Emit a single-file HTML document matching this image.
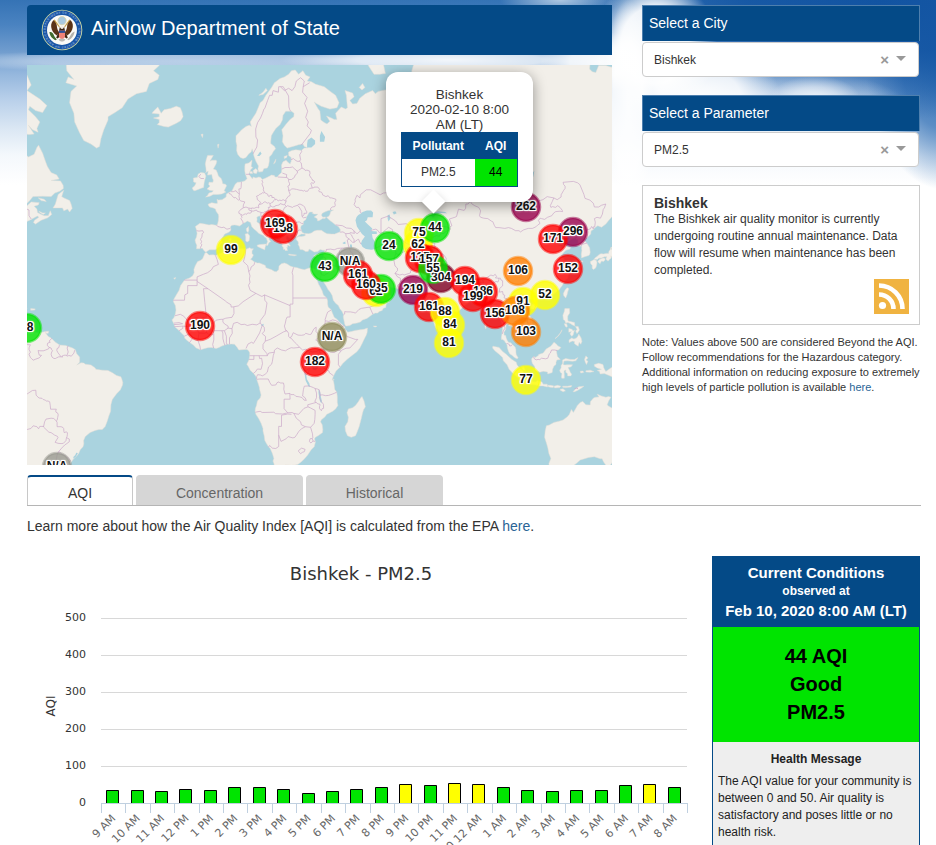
<!DOCTYPE html>
<html lang="en">
<head>
<meta charset="utf-8">
<title>AirNow Department of State</title>
<style>
*{box-sizing:border-box}
html,body{margin:0;padding:0}
body{width:936px;height:845px;overflow:hidden;position:relative;background:#fff;
 font-family:"Liberation Sans",Arial,Helvetica,sans-serif;color:#333;font-size:14px}
#sky{position:absolute;left:0;top:0;width:936px;height:330px;overflow:hidden;
 background:radial-gradient(ellipse 26px 110px at 628px 110px, rgba(255,255,255,.95) 0, rgba(255,255,255,.85) 60%, rgba(255,255,255,0) 100%),radial-gradient(ellipse 62px 70px at 655px 45px, rgba(255,255,255,.97) 0, rgba(255,255,255,.92) 55%, rgba(255,255,255,0) 100%),radial-gradient(ellipse 80px 50px at 700px 95px, rgba(255,255,255,.95) 0, rgba(255,255,255,.85) 50%, rgba(255,255,255,0) 100%),radial-gradient(ellipse 60px 30px at 600px 62px, rgba(255,255,255,.95) 0, rgba(255,255,255,.8) 50%, rgba(255,255,255,0) 100%),radial-gradient(ellipse 170px 14px at 450px 60px, rgba(255,255,255,.9) 0, rgba(255,255,255,.7) 55%, rgba(255,255,255,0) 100%),radial-gradient(ellipse 45px 22px at 815px 98px, rgba(255,255,255,.7) 0, rgba(255,255,255,.45) 50%, rgba(255,255,255,0) 100%),radial-gradient(ellipse 120px 40px at 790px 110px, rgba(255,255,255,.6) 0, rgba(255,255,255,.4) 50%, rgba(255,255,255,0) 100%),radial-gradient(ellipse 60px 16px at 560px 0px, rgba(255,255,255,.6) 0, rgba(255,255,255,0) 100%),radial-gradient(ellipse 300px 120px at 880px 0px, rgba(18,84,162,1) 0, rgba(18,84,162,.85) 45%, rgba(18,84,162,0) 100%),radial-gradient(ellipse 80px 135px at 945px 55px, rgba(34,100,174,.95) 0, rgba(40,105,178,.7) 55%, rgba(60,120,190,0) 100%),radial-gradient(ellipse 240px 12px at 180px 61px, rgba(255,255,255,.45) 0, rgba(255,255,255,.35) 60%, rgba(255,255,255,0) 100%),linear-gradient(to bottom,#3573b5 0,#4a83c1 25px,#6e9bcd 50px,#96b8de 75px,#b9d0ea 100px,#dce8f4 130px,#f4f8fc 155px,#fff 185px);}
#sky i{position:absolute;display:block;border-radius:50%}
.abs{position:absolute}
#hdr{left:27px;top:5px;width:585px;height:50px;background:#044a87;border-radius:4px 0 0 0}
#hdr .t{position:absolute;left:64px;top:11px;font-size:20px;line-height:24px;color:#fff;white-space:nowrap}
#map{left:27px;top:65px;width:585px;height:400px;background:#aad3df;overflow:hidden}
.bar{background:#044a87;color:#fff;font-size:14px;line-height:16px;padding:9px 6px 0 6px;height:36px;left:642px;width:278px;border:1px solid #4e7fae;border-bottom:none}
.sel{left:642px;width:277px;height:35px;background:#fff;border:1px solid #ccc;border-radius:4px;font-size:12px;line-height:14px;padding:10px 0 0 11px;color:#333}
.sel .x{position:absolute;right:29px;top:8px;font-size:15px;font-weight:bold;line-height:18px;color:#999}
.sel .c{position:absolute;right:12px;top:13px;width:0;height:0;border:5px solid transparent;border-top:5px solid #999;border-bottom:none}
#info{left:642px;top:185px;width:278px;height:140px;background:#fff;border:1px solid #ccc;padding:10px 11px;font-size:12px;line-height:17px;color:#333}
#info b{font-size:14px;line-height:15px;display:block;margin-bottom:0}
#note{left:642px;top:335px;width:290px;font-size:11px;line-height:15px;color:#333}
a{color:#2a6496;text-decoration:none}
.tab{top:475px;height:31px;border:1px solid #d6d6d6;border-bottom:none;border-radius:4px 4px 0 0;background:#d6d6d6;color:#666;font-size:14px;line-height:16px;text-align:center;padding-top:9px}
#t1{left:27px;width:106px;background:#fff;border:1px solid #c8c8c8;border-top:2px solid #044a87;border-bottom:none;color:#333;padding-top:8px}
#t2{left:136px;width:167px}
#t3{left:306px;width:137px}
#tabline{left:27px;top:505px;width:894px;height:1px;background:#b5b5b5}
#learn{left:27px;top:517px;font-size:14px;line-height:18px;color:#333;white-space:nowrap}
#cc{left:712px;top:556px;width:208px;height:300px;border:1px solid #044a87;background:#eee}
#cc .h{background:#044a87;color:#fff;text-align:center;font-weight:bold;height:70px;padding-top:6px}
#cc .h div{line-height:20px}
#cc .g{background:#00e400;color:#000;text-align:center;font-weight:bold;font-size:20px;line-height:28px;height:115px;padding-top:15px}
#cc .m{padding:9px 5px 0 5px;font-size:12px;line-height:17px;color:#222}
#cc .m b{display:block;text-align:center;margin-bottom:5px}
#chart{left:27px;top:556px;width:680px;height:289px}

.mk{position:absolute;width:40px;height:16px;font-weight:bold;font-size:12px;line-height:16px;text-align:center;color:#111;
 text-shadow:-1px -1px 0 #fff,1px -1px 0 #fff,-1px 1px 0 #fff,1px 1px 0 #fff,0 -1px 0 #fff,0 1px 0 #fff,-1px 0 0 #fff,1px 0 0 #fff,0 0 3px #fff,0 0 3px #fff;white-space:nowrap}
.pop{position:absolute;left:359px;top:7px;width:147px;height:130px;background:#fff;border-radius:12px;box-shadow:0 3px 14px rgba(0,0,0,.4);color:#333}
.pop .pt{position:absolute;left:0;top:15px;width:147px;text-align:center;font-size:13.5px;line-height:15px}
.pop table{position:absolute;left:15px;top:60px;width:117px;border:1px solid #044a87;border-collapse:collapse;font-size:12px}
.pop th{background:#044a87;color:#fff;height:26px;font-weight:bold;padding:0;text-align:center}
.pop td{height:28px;text-align:center;padding:0;color:#333}
.tip{position:absolute;left:398px;top:128px;width:17px;height:17px;background:#fff;transform:rotate(45deg);box-shadow:3px 3px 8px rgba(0,0,0,.25)}
</style>
</head>
<body>
<div id="sky">

</div>

<div id="hdr" class="abs">
<svg class="abs" style="left:14px;top:4px" width="42" height="42" viewBox="-21 -21 42 42">
<circle r="20.3" fill="#cfd9a4"/>
<circle r="19.4" fill="#1a56a6"/>
<path id="sealarc" d="M-16.4 0A16.4 16.4 0 1 1 16.4 0A16.4 16.4 0 1 1 -16.4 0" fill="none"/>
<text font-size="2.9" font-weight="bold" fill="#86a9dc" letter-spacing=".45"><textPath href="#sealarc">DEPARTMENT OF STATE ★ UNITED STATES OF AMERICA ★</textPath></text>
<circle r="15" fill="#fbfbf8"/>
<circle cy="-9.3" r="4.2" fill="#a9c9df" stroke="#dfd6a8" stroke-width=".8"/>
<path d="M-7.8 -10.2C-10 -9 -11.2 -6 -10.8 -3C-10.3 0.5 -8.5 3.3 -5.2 5.4L-2.8 2.4C-4.6 0.5 -5 -2.5 -5.2 -4.5C-5.5 -7 -6.5 -9 -7.8 -10.2Z" fill="#5b3418"/>
<path d="M7.8 -10.2C10 -9 11.2 -6 10.8 -3C10.3 0.5 8.5 3.3 5.2 5.4L2.8 2.4C4.6 0.5 5 -2.5 5.2 -4.5C5.5 -7 6.5 -9 7.8 -10.2Z" fill="#5b3418"/>
<path d="M-7.8 -10.2L-2.6 -3.2M7.8 -10.2L2.6 -3.2" stroke="#c9a24a" stroke-width="1.1" fill="none"/>
<path d="M-2.2 -3h4.4L3 1L5.8 7.8L4.5 8.6L0 5L-4.5 8.6L-5.8 7.8L-3 1Z" fill="#3d2411"/>
<circle cy="-2.8" r="1.7" fill="#f3efe4"/>
<path d="M-3.1 0.6h6.2v5a3.1 3.4 0 0 1 -6.2 0Z" fill="#f08278"/>
<path d="M-3.1 0.6h6.2v2.3h-6.2Z" fill="#2c4f96"/>
<path d="M-3.4 9.4C-2 12.2 2 12.2 3.4 9.4C2 8.6 -2 8.6 -3.4 9.4Z" fill="#bdbab6"/>
<path d="M-12.6 2.2C-10.6 1.4 -9 3 -8 5.4C-7.2 7.2 -6 8.4 -5 9.3L-6.6 10.2C-9 9 -12 6.6 -12.6 2.2Z" fill="#3f6a2e"/>
<path d="M12.6 1.6C10.4 2.4 9 4.2 8 6.2C7.2 7.8 6 8.6 5.2 9.3L6.5 10.3C9 9.2 12 6.4 12.6 1.6Z" fill="#b5b3ae"/>
</svg>
<div class="t">AirNow Department of State</div>
</div>

<div id="map" class="abs">
<svg class="abs" style="left:0;top:0" width="585" height="400" viewBox="0 0 585 400">
<path d="M268.2 5.0L271.6 9.3L275.9 5.8L278.7 10.2L283.0 11.9L280.1 16.0L284.4 16.8L288.7 19.3L297.2 21.7L304.3 27.2L308.6 30.3L312.0 37.7L310.0 42.7L302.9 44.1L294.4 41.3L289.2 38.4L287.2 37.0L290.9 43.4L292.9 46.2L293.8 55.0L297.2 57.6L300.0 58.9L302.9 56.3L299.5 51.0L304.3 53.0L307.2 54.4L310.0 54.4L308.6 48.3L314.3 42.0L318.5 44.1L320.5 42.7L320.0 37.7L319.4 30.3L318.0 25.6L325.6 28.0L327.1 31.8L322.8 35.5L325.6 39.1L329.9 38.4L332.8 33.3L338.4 28.7L345.6 25.6L348.4 28.7L351.2 26.4L358.4 24.9L364.0 26.4L366.9 22.5L368.3 16.0L378.3 20.1L385.4 24.1L389.6 28.0L385.4 18.5L384.8 5.8L389.6 -10.6L399.6 -12.6L422.4 -17.5L450.8 -38.8L493.5 -63.2L516.2 -22.6L519.1 -18.5L530.4 -15.5L536.1 -12.6L544.7 -17.5L556.0 -16.5L563.2 -5.0L562.6 4.1L565.2 6.7L568.8 7.6L571.7 0.5L578.8 0.5L584.5 2.3L593.0 -7.8L621.5 5.8L649.9 18.5L678.4 18.5L706.8 26.4L706.8 51.7L698.3 67.8L678.4 82.6L658.4 93.6L655.6 109.1L640.5 128.0L638.5 109.1L637.1 98.9L649.9 76.8L638.5 73.8L621.5 85.4L601.6 86.5L593.0 96.3L585.9 111.6L591.6 114.0L596.7 117.8L594.4 125.7L594.4 134.7L593.0 139.9L588.8 147.4L584.5 152.3L581.6 155.6L578.8 159.1L574.5 162.2L570.8 160.7L567.4 163.0L566.6 164.2L564.0 166.1L563.7 169.1L559.7 172.9L557.5 173.6L557.5 175.8L560.0 178.4L562.6 182.7L563.2 187.3L562.6 189.8L561.7 190.5L557.5 191.8L554.6 192.9L554.3 189.1L554.9 185.5L554.6 183.8L554.9 181.3L551.2 180.9L549.8 179.8L551.2 177.6L550.9 174.7L549.2 174.0L548.4 172.9L544.7 174.3L541.8 176.2L539.6 177.3L540.7 174.7L542.4 171.0L541.5 169.5L539.0 169.9L536.1 172.9L534.7 173.6L533.0 175.8L530.4 175.8L529.6 176.9L529.6 178.7L531.3 180.2L533.0 180.9L533.9 181.3L533.3 183.1L535.6 183.1L538.1 180.9L540.4 182.0L543.5 182.3L543.0 184.1L539.0 185.2L537.0 187.3L534.7 189.8L533.9 191.5L537.0 193.6L538.7 197.7L541.3 201.0L541.5 202.0L541.5 204.7L539.0 205.7L538.4 206.7L540.4 207.7L542.1 208.0L541.5 210.3L540.7 213.2L538.7 214.8L536.7 217.7L535.3 220.6L533.3 223.1L532.2 224.7L530.7 225.6L528.5 227.8L526.8 229.0L523.3 230.9L519.9 231.5L517.9 232.4L516.2 233.3L513.4 233.9L510.5 234.9L509.1 235.5L508.8 237.9L507.7 238.2L507.1 236.1L506.6 234.3L503.7 233.9L502.0 234.6L499.2 236.1L498.3 237.9L496.3 239.7L495.5 242.4L497.5 245.4L499.7 248.4L502.6 250.8L504.6 253.2L505.4 257.6L505.7 261.1L505.4 263.1L504.6 264.8L502.0 266.6L499.2 267.5L498.0 269.8L494.9 271.5L492.9 272.6L493.2 270.1L493.5 268.6L492.0 267.5L489.5 267.2L487.8 264.8L486.4 262.8L484.7 261.1L481.8 260.8L481.8 258.7L480.7 258.4L479.2 259.0L479.0 261.4L478.7 264.3L477.0 267.2L477.0 270.1L478.7 270.6L479.2 272.9L480.4 275.8L481.8 277.5L483.8 277.8L485.5 279.5L488.1 282.1L488.9 284.4L488.9 287.2L489.2 289.5L491.2 292.9L490.6 293.4L489.2 293.5L486.9 292.1L484.7 290.1L482.9 288.9L481.5 286.4L480.4 283.0L480.1 280.4L479.5 278.7L478.4 277.5L477.5 275.8L475.6 274.4L474.4 274.4L474.4 272.1L475.0 268.9L475.3 266.0L475.6 262.8L475.3 259.9L474.1 257.0L473.0 254.0L472.4 250.2L471.3 248.7L470.4 247.2L468.4 249.0L466.2 251.7L463.9 251.4L463.0 250.5L463.6 246.6L463.0 243.3L461.3 240.9L460.2 239.1L459.1 238.2L457.3 236.7L456.5 234.6L455.9 232.1L454.5 230.9L452.5 231.8L451.7 233.3L449.4 233.6L448.0 233.9L445.7 233.6L444.8 233.3L442.6 234.9L442.0 237.0L440.8 238.5L438.3 240.0L436.9 240.9L435.7 242.4L433.7 244.2L431.7 246.0L428.9 248.4L428.9 249.6L426.1 250.2L424.9 251.7L423.2 252.0L422.6 254.0L422.6 257.0L423.2 259.6L422.9 261.4L421.8 263.4L421.8 267.7L420.4 267.7L419.5 270.1L417.2 271.8L415.5 274.1L413.5 272.9L411.8 268.9L410.4 264.8L408.7 262.8L407.6 260.2L406.7 257.0L405.3 254.0L404.7 252.6L403.6 249.6L403.0 246.6L402.2 243.6L401.9 242.1L401.6 239.1L401.9 236.1L401.3 233.9L401.0 232.4L400.2 234.6L399.9 235.5L396.8 237.0L395.1 236.7L391.6 233.3L391.1 232.1L393.9 231.2L394.8 229.9L392.8 230.6L390.5 229.3L388.8 227.8L386.8 227.2L386.0 225.0L385.1 224.3L384.2 222.8L381.1 222.8L378.3 223.1L375.4 223.1L372.0 223.4L369.7 223.4L367.2 222.8L364.0 222.5L361.2 221.8L359.2 221.5L357.5 219.6L356.7 217.4L354.9 217.1L352.7 218.3L350.4 219.0L347.0 217.7L344.4 215.8L341.3 214.5L339.9 211.6L338.7 210.3L337.6 207.7L335.6 207.3L334.2 206.4L332.8 207.7L331.3 208.0L331.1 209.6L331.9 211.3L333.3 214.2L335.0 216.4L337.0 218.3L337.6 220.3L337.3 222.1L339.0 223.7L339.3 224.3L339.3 222.1L340.2 220.3L341.3 220.9L341.6 223.1L340.7 225.0L341.6 226.2L344.1 226.5L347.0 226.5L349.5 225.6L352.1 222.8L354.1 220.6L354.9 219.6L355.2 222.1L355.5 224.7L356.9 226.8L359.8 227.8L361.5 228.1L363.5 230.6L364.9 231.5L363.8 234.6L362.1 237.3L359.5 238.2L358.9 241.2L358.9 242.4L356.4 243.3L355.2 245.4L352.1 246.6L350.7 248.1L348.4 248.1L345.8 249.0L343.3 251.1L339.9 253.4L335.6 254.9L333.3 257.0L329.9 258.1L325.6 258.7L322.8 260.5L319.7 261.1L318.5 260.8L317.7 259.0L316.8 254.6L316.3 252.0L316.5 249.6L315.1 246.6L312.8 243.6L311.4 240.6L308.6 238.2L306.3 235.2L305.2 230.6L303.5 227.5L300.9 224.3L299.2 220.9L297.2 218.0L295.2 214.8L293.5 213.9L294.4 209.3L292.7 214.2L292.1 214.8L290.4 213.2L288.7 210.9L287.5 208.0L287.0 209.0L288.4 212.6L290.4 215.8L291.5 219.0L293.2 222.1L295.2 225.9L296.4 229.9L299.8 233.0L300.6 236.1L300.6 239.1L301.2 242.1L304.0 244.5L305.7 248.7L307.2 252.3L310.0 254.3L313.1 257.9L316.0 260.2L317.7 261.7L318.0 264.0L316.5 264.0L318.5 264.6L320.8 267.2L324.2 266.6L328.5 265.4L332.8 264.8L337.0 264.3L340.4 263.1L340.2 267.2L339.3 270.1L337.0 274.4L335.0 278.7L332.8 283.0L329.9 286.7L325.6 290.1L323.7 291.5L320.0 294.4L315.7 298.6L313.1 302.0L310.9 304.3L309.2 305.7L307.7 308.6L306.3 311.4L305.2 314.3L306.6 316.6L307.2 320.0L307.7 324.3L309.7 327.2L310.3 331.6L310.3 337.4L310.9 340.4L308.6 343.9L305.7 346.3L301.5 348.4L299.8 349.3L297.8 352.0L294.4 354.7L293.5 356.8L295.2 359.8L295.8 364.5L295.5 367.6L291.5 370.4L288.4 372.3L287.5 373.8L288.4 377.0L287.2 381.8L284.4 384.4L283.0 386.4L280.7 390.0L277.3 394.0L274.4 396.7L270.8 399.5L267.9 400.1L264.5 400.5L258.8 400.1L251.7 402.9L248.8 401.2L247.1 401.2L247.1 399.1L246.0 396.1L246.9 393.4L245.4 388.4L243.2 383.5L241.5 381.8L239.5 378.6L237.8 375.4L237.2 370.7L236.0 366.0L236.0 363.5L234.1 358.3L231.8 353.8L228.9 349.3L228.1 346.3L228.4 343.3L229.5 340.4L230.4 336.0L233.2 333.0L234.1 330.1L232.6 324.3L232.4 322.3L231.2 318.6L229.8 314.6L228.9 311.4L226.7 308.6L223.2 305.2L221.3 301.5L219.8 299.2L221.3 296.3L222.1 294.4L222.7 290.7L222.7 287.8L221.8 286.1L220.1 284.4L218.4 284.4L214.7 284.7L211.9 285.0L210.2 282.4L207.6 279.2L204.5 279.0L200.5 279.2L197.6 280.1L194.8 281.0L192.0 282.4L189.1 283.5L186.3 282.7L183.4 282.4L180.6 282.7L177.7 283.5L173.5 284.7L169.2 283.0L166.4 280.1L163.5 278.1L160.7 276.1L157.8 273.2L157.0 270.6L155.0 268.6L152.7 266.3L150.7 264.3L147.9 261.9L147.0 259.0L145.0 254.9L147.0 252.6L148.2 249.6L149.0 245.1L148.4 240.6L146.4 236.7L146.7 234.6L149.3 229.9L152.1 225.3L153.6 220.6L157.0 215.8L158.1 214.5L162.1 213.2L165.5 210.9L167.2 207.7L166.9 204.4L168.4 200.4L170.6 196.6L173.2 195.6L175.5 193.9L177.2 190.1L178.0 188.0L179.7 187.7L182.0 190.1L186.3 189.8L189.1 190.5L192.0 188.7L194.8 187.7L197.6 185.9L201.9 184.8L203.6 184.5L207.6 184.1L210.4 184.5L213.3 183.8L216.1 183.8L219.6 184.1L222.7 182.7L224.1 183.8L226.4 183.8L225.0 185.9L225.0 188.4L226.4 190.1L225.2 192.5L223.5 194.3L225.5 195.6L227.5 197.0L230.4 198.0L232.4 198.0L236.0 199.4L238.3 200.4L238.9 202.7L241.7 203.7L244.6 204.7L247.4 206.4L249.4 206.7L251.7 204.7L252.0 201.0L254.5 198.7L257.4 198.0L260.2 199.0L263.1 201.0L265.9 202.0L270.2 202.7L273.0 203.7L277.3 204.7L280.1 203.7L283.0 202.7L285.8 203.0L287.2 204.0L290.1 204.0L292.4 203.4L293.8 200.4L294.4 197.7L295.8 194.6L296.9 191.8L296.6 189.1L297.2 187.3L297.8 185.2L295.8 185.2L293.2 184.5L290.7 186.6L287.2 187.0L284.4 185.2L282.1 184.1L281.3 186.3L278.7 186.6L275.9 184.8L273.0 184.5L272.5 182.0L271.0 179.1L271.6 178.4L271.0 176.6L269.3 174.7L269.3 172.9L271.6 171.4L274.4 171.4L277.3 171.0L278.7 169.9L277.3 169.1L277.9 168.4L281.6 168.7L284.4 168.0L287.2 166.1L290.1 165.3L294.4 165.3L297.2 167.2L300.0 168.7L304.3 169.1L307.7 169.1L311.4 167.6L313.1 166.9L313.4 164.6L311.4 161.5L308.6 159.9L305.7 157.5L302.9 155.6L300.9 153.6L299.5 152.3L301.5 151.5L302.9 149.5L303.7 146.6L306.6 145.0L304.3 145.0L301.5 145.4L298.6 146.6L295.2 148.3L294.4 150.3L295.8 152.3L298.6 151.9L298.1 153.6L295.5 153.6L292.9 155.2L290.7 156.0L290.1 153.6L287.2 151.9L290.1 149.9L290.7 149.1L287.2 149.1L285.3 148.3L285.8 147.0L283.0 147.0L282.1 147.4L281.0 149.5L279.3 152.3L279.0 154.4L276.4 156.4L276.2 159.5L274.2 160.7L273.6 163.0L274.4 165.3L275.0 167.2L277.3 168.4L277.0 169.1L274.4 169.1L272.5 169.9L270.8 171.0L269.3 172.5L269.0 170.6L268.8 169.9L265.9 169.5L264.2 169.5L263.1 171.4L263.9 172.1L262.2 172.9L261.4 171.7L259.9 171.0L259.1 172.9L259.9 174.7L260.8 176.2L259.9 176.9L261.6 178.4L263.1 180.2L263.1 181.3L261.6 180.5L260.2 180.5L260.8 182.3L259.7 182.0L260.5 185.5L258.8 185.5L258.5 185.9L257.7 184.1L256.5 184.5L256.2 182.0L254.8 180.9L255.7 179.5L254.8 178.7L253.7 176.6L252.3 174.3L251.4 172.9L250.0 171.4L250.0 168.0L250.0 165.7L247.4 163.8L244.6 161.5L241.5 159.5L238.0 156.8L236.0 152.8L234.3 154.4L233.2 151.5L233.8 150.7L231.8 151.1L229.8 152.3L230.1 154.4L229.8 156.8L230.6 157.5L233.2 159.1L234.6 162.6L236.6 164.9L238.0 165.7L240.3 165.7L240.0 167.2L242.9 168.7L246.0 170.6L247.4 172.5L247.1 173.6L245.7 172.1L243.7 171.0L242.0 172.9L242.0 174.3L243.7 176.6L242.0 177.6L240.6 180.5L239.2 180.2L240.0 178.0L240.6 176.6L239.2 172.9L237.5 172.1L236.6 170.6L235.2 169.9L231.8 168.4L229.5 166.1L226.7 163.8L224.7 161.5L224.1 159.5L223.5 157.5L220.4 156.0L218.1 157.5L216.1 158.3L214.7 159.5L212.4 161.1L209.9 160.3L207.6 159.9L204.8 160.3L203.3 161.9L203.9 164.2L203.3 166.1L201.1 167.6L197.6 169.1L196.8 170.6L194.8 173.6L194.0 175.1L195.4 177.3L193.4 179.1L192.5 181.6L189.7 183.8L188.5 184.8L184.8 184.8L182.3 184.8L179.7 186.6L178.9 187.3L176.9 185.5L175.2 183.1L172.3 183.8L169.5 183.8L169.8 180.2L168.6 177.6L168.1 175.1L169.5 172.1L170.1 168.4L169.5 164.9L168.4 161.5L171.2 159.5L172.9 158.3L177.7 159.1L182.0 159.9L184.8 159.5L189.1 160.3L190.5 159.5L191.4 155.6L191.7 151.5L191.4 149.5L189.1 146.2L188.5 144.1L186.3 142.9L182.6 142.0L181.2 139.9L181.4 139.0L184.8 137.7L189.1 138.6L190.5 138.2L190.0 134.2L191.4 135.1L195.1 134.7L199.1 132.0L199.4 128.9L201.9 127.6L204.8 126.2L206.2 123.4L208.2 119.2L210.4 117.3L214.4 116.9L217.6 115.9L219.3 114.5L220.1 113.5L219.3 111.6L218.4 109.1L217.8 106.1L217.8 101.5L218.1 98.9L221.8 97.9L225.0 95.2L224.7 97.9L224.1 101.5L225.8 102.5L223.8 104.6L222.7 107.1L221.8 109.1L223.2 111.1L225.5 114.0L226.1 112.0L228.9 113.0L231.8 112.0L233.8 112.5L235.2 114.5L238.9 113.0L241.7 111.6L244.6 110.1L247.4 110.6L248.0 112.0L250.3 112.0L251.7 110.1L254.5 107.6L254.8 104.1L254.5 100.0L256.0 96.8L259.1 95.2L260.8 97.3L263.1 98.9L264.2 96.3L264.2 92.5L261.6 90.4L261.6 87.1L265.1 85.4L268.8 84.8L274.4 85.4L277.3 83.1L280.7 82.9L277.3 81.4L275.9 79.1L271.6 79.7L265.9 81.4L260.2 83.1L257.4 80.3L255.4 76.8L256.0 70.8L254.8 64.7L258.8 59.6L263.1 54.4L266.8 51.7L267.1 48.3L264.5 46.2L258.8 46.2L256.0 50.3L255.4 55.0L253.1 59.6L248.8 63.4L246.0 67.8L244.3 70.8L243.7 76.8L243.7 78.5L247.4 81.4L248.6 83.7L246.3 86.5L244.6 89.8L242.3 92.0L242.3 96.3L241.5 100.5L240.3 103.0L236.9 103.6L235.5 106.6L231.8 107.1L230.9 104.1L231.5 101.0L228.9 96.3L226.9 90.9L226.4 88.2L225.2 83.7L224.1 87.1L221.8 88.7L219.0 92.5L216.1 93.6L213.3 92.5L210.7 89.3L209.6 85.4L209.9 80.3L209.0 76.8L209.0 70.8L211.9 67.8L214.7 64.7L219.0 61.5L222.4 60.2L224.4 61.5L223.2 57.0L226.1 52.4L228.9 48.3L231.2 42.7L233.2 37.7L236.0 35.5L238.9 30.3L241.7 26.4L244.6 22.5L247.4 17.7L248.8 16.8L253.1 13.5L257.4 11.9L261.6 9.3L264.5 5.8ZM178.6 132.0L182.9 131.2L186.3 129.4L190.5 129.4L194.8 128.9L198.8 127.1L197.1 125.7L199.6 120.7L198.5 119.2L195.7 118.8L195.1 115.9L194.2 113.5L191.4 111.1L190.5 108.1L189.1 105.1L186.3 104.1L187.4 102.0L189.1 98.9L189.7 96.3L189.1 95.2L184.8 95.2L182.9 96.3L185.4 92.0L186.3 90.4L180.6 90.4L179.2 94.7L178.3 98.9L178.9 102.5L179.2 106.6L178.6 107.6L181.2 106.1L180.6 110.1L184.8 109.6L185.4 113.0L186.3 115.0L186.0 117.3L182.0 117.3L181.7 119.7L183.1 121.1L180.0 123.9L182.6 125.3L186.3 125.7L185.4 127.1L182.0 128.0L180.3 130.7ZM176.6 122.5L177.2 117.3L178.9 111.1L177.5 108.1L173.8 107.6L171.2 109.1L170.3 112.5L166.4 113.0L166.6 116.9L169.2 117.8L167.8 120.7L165.2 123.0L166.4 125.3L167.8 125.7L171.2 124.4L174.9 123.0ZM130.2 59.6L137.1 61.5L141.3 62.1L149.3 58.3L153.6 55.7L156.1 51.7L155.0 46.9L153.3 42.7L149.3 41.3L143.6 43.4L137.1 44.8L134.2 48.3L130.8 42.0L126.5 46.2L125.1 48.3L132.2 49.0L132.2 51.7L126.5 53.0L132.2 54.4L132.2 57.6ZM38.4 -12.6L39.8 5.8L46.9 14.4L41.2 11.9L38.9 17.7L49.7 20.9L44.0 26.4L42.6 37.7L46.9 48.3L47.7 57.0L52.6 67.8L56.8 75.6L64.0 79.1L69.6 83.1L72.5 81.4L73.9 73.8L76.8 64.7L81.0 55.0L81.0 51.7L87.9 47.6L95.2 42.7L100.9 34.0L109.5 28.7L119.4 26.4L122.3 18.5L130.8 14.4L132.2 10.2L126.5 5.8L132.2 0.5L132.2 -12.6L137.9 -44.6L109.5 -158.2L24.1 -136.4L-4.3 -69.9L24.1 -44.6ZM-32.8 -12.6L-18.5 -7.8L-7.2 2.3L-0.0 10.2L4.2 20.1L-0.0 25.6L7.1 30.3L12.8 34.0L19.9 40.6L15.6 47.6L8.5 45.5L2.8 41.3L1.4 44.8L8.5 51.7L12.8 57.0L9.9 63.4L11.1 67.2L5.6 64.7L1.4 60.2L7.1 69.0L1.4 69.6L-10.0 65.9L-32.8 51.7ZM-61.2 93.6L-27.1 88.2L-25.6 67.8L-14.3 69.0L-4.3 76.8L-2.9 88.2L1.4 92.0L7.1 89.3L9.9 82.6L11.6 80.3L15.6 88.2L18.4 96.3L20.4 101.5L24.1 107.6L29.8 110.1L32.1 114.0L24.1 115.4L33.5 115.9L36.1 120.2L36.4 123.4L32.7 126.2L27.8 128.0L24.1 131.6L15.6 131.2L5.9 131.6L2.8 135.6L-2.9 141.2L-5.7 145.4L-1.5 142.0L4.2 136.9L12.2 137.7L11.3 139.9L7.1 141.2L9.9 144.1L10.5 147.4L13.3 149.1L17.0 150.7L21.3 150.7L23.3 145.8L24.7 149.5L20.7 152.8L14.2 155.2L8.5 159.1L6.5 157.5L7.6 155.2L11.9 152.3L10.5 151.1L7.1 152.8L4.2 154.4L-0.0 156.4L-4.3 158.7L-6.6 163.4L-4.3 166.1L-10.0 168.4L-15.7 171.0L-61.2 207.7ZM26.1 142.9L28.4 139.0L31.2 129.4L36.7 125.3L34.7 131.6L36.9 132.9L42.6 135.6L44.0 139.0L45.2 143.3L42.6 147.0L40.6 144.1L36.9 145.8L35.5 142.9ZM11.3 132.9L17.0 134.2L19.3 136.4L14.2 135.6ZM11.9 146.2L15.6 147.9L18.4 147.9L16.2 149.5L12.8 147.4ZM-61.2 262.8L-10.0 262.8L-8.6 265.7L-4.3 264.3L-3.7 262.2L0.2 265.1L1.4 267.2L7.1 266.9L11.3 268.0L18.4 266.6L19.0 268.6L21.3 271.5L24.1 272.9L28.4 277.2L32.7 280.1L38.4 280.4L45.5 283.0L48.3 284.7L49.7 288.7L52.6 292.1L52.6 297.2L49.7 300.0L54.0 297.8L56.8 298.1L58.3 299.2L64.0 300.0L68.2 302.9L68.8 304.3L75.3 305.2L81.0 305.5L85.3 307.7L89.6 310.6L93.8 311.7L94.7 313.7L95.8 317.4L95.5 320.0L93.3 324.9L89.6 328.7L85.3 334.5L83.9 339.8L83.6 346.3L81.9 350.8L80.2 356.2L78.2 361.4L75.3 364.5L71.9 364.5L68.2 365.4L63.1 367.6L58.3 371.6L56.6 375.4L56.8 378.9L56.0 381.8L53.4 384.4L51.7 388.4L49.7 391.0L46.6 393.7L42.9 399.1L41.2 401.9L38.6 403.6L34.9 403.2L31.2 401.5L28.7 400.1L28.7 402.2L32.1 405.3L32.7 408.9L29.8 421.5L-61.2 421.5ZM18.7 266.6L21.6 266.3L21.3 268.3L18.7 268.3ZM3.7 243.6L8.2 243.9L7.6 245.1L3.7 245.3ZM-10.0 239.4L-4.3 239.7L0.2 243.3L-4.3 244.2L-8.6 246.0L-11.4 244.5ZM335.0 331.6L337.0 336.0L338.4 341.8L336.5 344.8L335.6 347.8L334.2 353.8L332.2 361.4L329.9 367.6L328.5 370.7L324.2 372.3L320.5 370.7L318.5 366.0L318.0 361.4L320.8 356.8L321.4 352.3L320.0 347.8L321.4 343.9L325.6 342.7L328.5 340.4L331.3 336.8L333.6 333.0ZM422.1 269.2L424.6 271.5L426.1 272.9L427.5 275.8L427.2 277.8L425.2 279.8L422.9 280.1L421.8 277.5L421.8 274.4L422.4 271.5ZM465.9 281.2L472.1 282.4L475.6 286.4L479.2 289.2L481.5 291.5L484.9 294.4L489.2 297.2L490.1 300.0L492.0 302.3L493.2 303.7L496.3 305.7L496.0 310.0L495.7 313.7L493.5 313.7L492.0 313.2L489.2 311.2L485.8 308.3L482.1 304.3L480.1 299.8L476.4 295.8L475.6 292.4L472.1 289.2L467.9 285.8L465.6 283.0ZM494.0 316.6L496.3 314.0L498.6 314.3L502.0 315.2L503.7 316.3L508.8 316.9L510.3 315.4L514.8 316.9L515.4 317.7L516.2 319.2L520.2 319.2L520.5 322.0L516.2 320.9L512.0 320.9L507.7 319.7L503.4 319.5L500.6 319.2L497.5 318.3ZM520.5 320.3L523.6 320.3L526.8 320.9L526.2 322.6L523.3 322.3L520.8 321.5ZM527.0 321.2L530.4 320.3L533.9 321.2L532.7 322.6L527.6 322.9ZM535.6 321.2L540.4 321.2L544.7 320.6L544.1 322.0L539.0 322.6L535.9 322.3ZM533.3 324.3L536.1 323.8L538.4 325.8L536.1 326.7L533.3 325.2ZM546.1 326.7L548.9 323.5L551.8 321.8L556.9 321.2L554.6 322.9L550.4 325.5L547.5 326.7ZM506.6 291.5L508.5 292.4L511.4 290.4L511.7 289.5L516.2 288.1L519.1 284.1L523.3 281.5L524.8 280.1L527.0 277.2L529.6 279.2L530.7 280.7L533.9 282.4L531.9 284.7L529.3 285.2L529.9 288.7L530.4 291.5L533.3 294.4L529.9 294.9L529.0 297.2L529.0 299.5L527.0 300.9L525.6 304.3L525.3 307.2L524.8 307.7L521.9 308.6L520.8 308.9L520.5 306.9L516.2 306.3L512.8 307.2L508.3 305.5L507.7 301.5L505.4 298.6L504.8 296.3L504.6 293.8ZM535.6 294.9L538.7 293.5L543.2 294.4L547.5 294.6L550.9 292.6L548.9 295.8L545.5 296.3L540.4 295.8L537.0 296.1L536.1 299.5L537.8 300.0L539.8 299.8L545.5 299.8L544.1 301.8L541.0 302.6L542.7 305.7L543.2 307.2L544.7 309.2L543.8 310.9L540.7 310.9L540.4 308.6L538.7 307.2L539.0 304.9L537.0 305.7L537.3 310.0L537.3 313.2L534.7 313.2L534.4 311.7L535.0 308.6L533.3 307.2L532.7 305.2L534.1 302.9L534.1 300.6L535.6 298.6ZM557.5 294.4L558.9 290.9L560.9 292.9L558.9 294.9L560.9 296.3L559.5 299.5L558.3 297.2ZM558.9 305.7L563.2 305.2L566.9 306.6L563.2 307.2L558.9 306.9ZM553.2 306.3L556.0 306.0L556.6 307.4L553.8 308.0ZM537.8 243.6L542.4 243.6L542.7 248.1L540.7 251.1L540.7 254.0L541.0 256.1L543.2 256.4L547.5 257.6L547.8 261.1L545.5 259.9L543.2 258.4L541.0 257.6L538.7 257.9L537.8 255.5L536.4 254.6L535.9 250.2L537.3 246.6ZM551.8 269.2L554.1 272.9L554.9 276.4L553.8 279.2L552.1 277.2L551.2 281.2L547.5 278.7L547.5 276.4L545.5 276.1L542.1 277.5L542.1 274.9L544.7 272.9L546.9 274.1L549.5 272.9L550.9 271.2ZM548.4 261.4L551.2 261.4L552.4 265.1L550.6 268.0L549.8 268.6L548.7 266.0L550.1 264.3ZM541.8 263.4L545.0 264.3L546.1 266.0L547.5 265.1L546.1 270.1L544.7 271.2L543.0 268.9L544.4 266.6L541.8 267.2ZM528.2 273.2L530.4 271.5L533.3 268.0L535.0 264.8L533.9 267.5L531.3 270.9L528.7 273.5ZM537.3 258.7L539.6 258.7L540.4 261.4L539.0 262.2L537.8 260.2ZM540.4 222.8L541.8 223.7L540.7 226.8L540.1 229.6L538.7 233.0L536.7 230.6L536.4 228.4L537.8 225.6L539.0 223.7ZM504.0 241.5L505.7 239.1L509.1 238.8L510.5 240.3L509.1 242.7L506.6 244.5L504.0 243.6ZM567.1 194.6L569.4 195.6L570.0 197.7L569.4 201.0L568.6 203.0L566.6 204.4L565.2 203.4L565.2 200.4L563.7 198.7L563.4 196.6L565.4 195.6ZM570.8 196.3L572.8 194.3L576.0 192.9L578.0 193.6L578.0 194.9L576.5 196.6L574.5 196.0L573.1 198.7L571.7 197.7ZM567.1 194.3L568.0 192.9L570.3 191.2L572.3 189.4L574.0 188.7L576.5 189.1L579.4 188.4L581.6 188.4L581.9 186.6L583.6 184.1L583.6 182.7L585.3 182.0L584.5 183.4L584.5 184.5L588.8 182.7L590.2 180.2L592.5 176.6L593.0 172.9L593.0 170.6L593.9 168.4L597.0 167.6L597.3 171.0L598.7 174.7L597.3 179.1L595.6 183.8L594.7 186.3L595.3 188.4L592.5 191.2L592.2 189.8L590.5 190.1L589.6 192.2L588.8 190.8L587.9 192.2L584.5 192.2L583.9 190.8L584.2 193.2L582.5 194.6L581.1 196.1L579.1 194.6L579.1 193.2L579.9 191.8L577.4 191.8L574.5 192.9L571.7 193.2L570.3 194.6L567.4 194.3ZM567.4 299.5L571.7 298.3L576.0 299.5L576.8 302.9L578.8 306.6L583.1 303.5L585.9 301.5L590.2 302.9L595.9 304.6L621.5 314.3L595.9 323.2L591.6 320.0L587.3 321.2L589.6 317.2L587.3 312.9L581.6 310.3L577.4 308.6L573.1 308.9L572.5 306.6L570.3 305.5L574.5 304.3L570.3 302.9L567.4 301.2ZM519.4 360.8L522.2 360.1L527.0 357.4L532.2 356.2L536.1 355.0L540.4 351.7L542.4 349.3L544.4 344.5L546.4 347.5L548.9 343.3L550.4 340.4L553.2 337.4L555.8 336.5L558.9 339.8L563.2 340.1L563.4 336.8L565.4 334.2L566.9 332.7L568.8 332.2L572.0 331.9L570.3 329.3L574.5 331.0L578.8 332.2L581.6 331.6L583.9 332.2L581.6 336.0L580.2 339.8L581.4 341.0L584.5 342.7L587.3 344.8L591.6 347.8L595.3 347.5L621.5 355.3L621.5 421.5L585.9 407.1L585.9 400.1L586.8 395.0L584.5 398.4L581.4 402.9L578.8 400.1L576.5 396.7L575.1 393.7L573.1 393.7L567.4 391.7L561.7 392.4L553.2 395.0L548.9 398.8L546.1 400.8L536.1 401.2L530.2 403.6L526.2 403.6L522.2 401.5L521.9 398.4L523.9 393.4L521.9 388.4L520.8 382.8L519.6 378.6L517.6 372.3L518.2 366.0ZM286.7 190.8L288.7 189.8L293.2 188.4L291.5 190.8L288.7 192.2ZM261.6 189.1L264.5 189.4L269.6 190.1L267.3 190.8L261.9 190.1ZM230.1 180.2L232.9 179.5L239.2 179.1L238.0 182.7L237.8 184.8L234.6 183.4L230.6 181.6ZM218.1 169.1L221.0 168.4L222.7 171.0L222.1 175.8L220.1 176.9L218.7 175.8L218.7 171.7ZM219.3 163.8L221.5 161.5L221.8 165.3L221.0 167.6L219.6 166.1ZM201.6 174.3L203.6 173.2L204.5 174.3L203.3 175.5ZM226.1 105.6L228.9 103.6L230.6 105.6L229.5 108.6L226.7 108.1ZM222.7 106.6L225.2 106.6L225.5 108.6L223.2 108.6ZM246.6 98.9L248.8 94.2L248.3 97.3ZM257.1 91.5L260.2 90.4L259.7 92.5L257.4 93.6ZM231.8 30.3L236.0 27.2L238.9 23.3L240.3 25.6L236.0 29.5ZM346.4 261.1L349.8 261.1L349.0 261.9L347.0 261.7ZM332.2 22.5L335.6 18.5L337.9 22.5L335.0 24.9ZM341.3 0.5L347.0 9.3L352.7 9.3L358.4 8.4L356.9 1.4L354.1 -12.6L342.7 -12.6ZM553.8 196.6L555.8 196.0L555.5 197.0ZM146.7 213.2L148.7 212.6L147.9 214.2ZM174.0 69.6L176.0 69.0L175.5 72.6ZM190.5 79.7L192.0 79.1L191.1 83.1ZM306.3 313.7L307.2 314.9L306.6 315.4ZM494.3 302.0L496.9 301.8L498.3 305.5L496.3 305.2ZM458.5 258.4L459.3 261.4L458.8 264.0L457.9 261.4Z" fill="#f2efe9" stroke="#e4dfd6" stroke-width="0.5" stroke-linejoin="round"/>
<path d="M334.2 148.3L331.3 149.9L329.6 151.9L328.5 155.2L329.9 161.5L332.2 164.9L335.0 169.1L337.9 171.4L335.0 175.5L333.9 178.7L335.6 182.0L339.0 184.1L344.4 184.8L348.4 184.1L348.1 182.0L347.8 176.6L345.6 172.9L345.0 169.1L349.8 169.1L349.8 166.5L344.1 166.1L345.3 163.4L340.4 159.1L337.9 156.4L339.9 155.2L340.7 152.3L345.6 152.3L346.1 147.4L344.1 145.4L339.9 145.4L335.6 147.0ZM280.1 82.6L284.4 82.6L288.1 79.1L288.1 75.6L284.4 72.6L280.7 75.0L280.1 79.1ZM292.9 76.8L297.2 76.8L298.1 72.0L294.4 65.9L292.9 70.8ZM285.0 300.0L287.2 296.6L291.5 296.3L292.9 298.6L290.9 302.9L288.7 305.2L285.8 304.3ZM277.9 306.9L279.3 310.0L279.9 314.3L282.4 318.6L283.0 322.0L281.6 321.5L278.7 315.7L277.9 311.4ZM291.5 324.3L293.2 327.2L293.8 331.6L294.9 336.0L294.4 338.6L292.9 336.0L292.1 331.6L291.5 328.1ZM360.6 150.3L362.6 149.5L363.5 153.6L361.5 156.4L360.6 153.6ZM365.5 147.0L368.3 146.2L369.7 148.3L366.9 149.5ZM403.9 151.1L406.1 148.3L411.0 146.2L418.1 147.0L420.1 148.3L415.2 147.9L409.6 148.7L406.1 152.8ZM490.1 125.3L494.9 121.1L500.6 116.4L505.7 108.1L507.4 105.6L506.3 111.6L502.9 118.8L497.2 123.9L492.0 126.2ZM411.6 163.4L415.2 162.6L417.5 163.8L413.8 164.9ZM230.1 90.9L233.2 86.5L234.6 88.7L232.4 90.9ZM296.6 284.4L298.1 284.7L299.2 289.8L298.1 290.1ZM234.1 259.9L236.3 258.7L236.9 260.5L234.6 261.1ZM322.8 179.5L324.8 179.5L325.1 182.7L323.4 183.1ZM315.4 178.0L318.3 176.6L318.5 179.1L316.3 178.7ZM49.2 387.7L50.9 388.0L48.9 391.7L46.6 393.4L46.3 392.0L48.3 390.0Z" fill="#aad3df"/>
<path d="M188.5 190.5L190.0 194.3L191.4 199.4L186.3 201.7L184.6 204.7L180.6 207.7L176.3 209.3L170.1 211.9L170.1 216.4M170.1 215.1L157.3 215.1M170.1 216.4L170.1 220.6L160.7 220.6L160.7 228.4L157.8 229.9L157.5 235.2L146.4 235.2M170.1 216.4L180.9 223.7L198.2 235.8L199.9 237.3L203.9 239.7L204.2 242.1L206.8 241.8L211.3 240.9L216.1 236.7L228.9 228.4M180.9 223.7L176.5 223.7L177.8 237.3L179.2 250.2L179.2 252.6L167.6 252.6L164.7 253.7L161.2 254.6L160.1 255.2L158.4 253.2L156.7 251.1L153.3 249.3L147.9 250.8M160.1 255.2L162.1 261.7L155.8 261.1L152.1 261.4L147.3 261.7M147.0 258.1L152.1 257.6L155.6 258.7L152.1 259.3L147.0 259.6M155.8 261.1L155.8 263.4L152.1 265.7M162.1 261.7L168.9 261.9L172.0 268.0L170.9 275.2L168.4 274.7L165.8 273.2L163.2 268.6L157.3 271.2M165.8 273.2L162.4 277.8M170.9 275.2L172.9 281.0L173.5 284.7M172.0 268.0L177.7 268.3L179.4 267.5L180.0 263.7L182.3 261.4L183.4 258.4L186.0 258.4L189.1 255.2L194.0 254.3L195.9 254.3L198.8 253.2L205.0 252.3L207.0 248.4L206.8 241.8M179.4 267.5L181.4 269.2L186.8 269.8L186.8 274.9L185.7 279.5L186.6 283.0M186.8 269.8L186.6 265.7L194.8 265.7L195.9 268.0L195.9 273.5L196.8 277.2L197.9 280.4M194.8 265.7L197.4 265.7L199.4 271.2L199.4 277.8L200.2 279.8M197.4 265.7L201.1 263.1L205.0 263.7L205.3 268.3L202.5 272.9L202.5 279.2M195.9 254.3L195.9 257.0L197.6 259.0L201.1 261.1L201.1 263.1M205.0 263.7L206.5 258.4L210.2 257.3L214.1 259.6L217.6 259.3L220.4 260.5L225.2 259.3L229.8 259.9L233.2 257.9M233.2 257.9L233.2 255.8L238.0 249.3L238.9 245.1L240.0 237.9L237.8 235.2L237.5 229.9M228.9 228.4L234.9 231.5L237.5 229.9L263.1 240.6M263.1 240.6L263.1 239.1L265.9 239.1L265.9 233.0L265.9 210.3L265.1 207.7L266.5 202.4M265.9 233.0L299.8 233.0M228.9 228.4L223.2 225.3L221.5 220.3L223.0 217.4L222.4 213.9L223.0 210.9L221.8 206.7L223.5 204.7L224.1 202.0L227.2 199.7L227.5 197.3M221.8 206.7L220.7 200.7L218.7 198.7L216.4 196.6L217.8 191.8L218.7 184.1M263.1 240.6L263.1 252.0L260.2 252.0L259.1 254.3L258.2 258.7L257.4 261.1L258.8 265.7L259.9 265.7M259.9 265.7L256.5 266.9L249.1 271.2L243.2 274.4L238.3 276.1L238.6 271.5L235.2 268.6L237.5 266.0L237.2 262.2L235.2 260.5L233.2 257.9M235.2 260.5L232.6 268.0L228.9 274.4L226.4 278.4L224.7 277.2L221.0 279.0L219.0 283.5M238.3 276.1L236.0 279.5L236.0 283.8L240.0 288.7L240.3 290.7L232.1 290.7L226.9 290.7L222.7 290.7M226.9 290.7L226.9 294.4L222.1 294.4M232.1 290.7L232.6 293.5L234.6 293.2L235.5 298.6L234.1 304.3L230.4 304.0L228.4 306.9L226.4 308.3M240.3 290.7L241.7 288.1L247.4 287.2L246.3 290.4L245.4 296.3L244.6 299.2L241.5 302.0L240.3 307.2L238.0 309.4L235.2 310.9L233.5 310.0L230.6 309.7L229.8 311.4L229.5 313.7M247.4 287.2L247.4 285.2L250.3 283.0L254.5 285.0L258.5 285.8L261.1 284.1L264.2 282.7L266.8 283.0L272.7 282.4L269.3 278.7L266.2 275.8L264.8 273.8L262.8 272.6L261.6 271.5L261.6 268.3L259.9 265.7M262.8 272.6L264.5 271.8L266.2 267.7L271.0 270.1L274.4 270.3L277.3 269.8L278.7 268.3L282.4 269.5L284.1 269.2L287.0 263.7L289.2 262.2L289.0 266.6L290.9 268.6L291.4 270.1M291.4 270.1L291.5 272.4L288.7 274.9L291.5 276.7L295.2 281.5L296.9 284.1M291.4 270.1L292.4 266.9L293.5 266.0L293.8 264.8L295.2 262.5L296.9 261.1L298.1 258.1L298.3 255.8L298.1 254.6L299.5 250.2L300.6 247.2L304.0 245.1M298.3 255.8L301.8 256.4L305.7 254.9L308.6 255.5L312.0 257.6L315.1 261.4L313.4 264.0L313.7 265.7L316.5 266.0L317.4 264.3M315.1 261.4L317.4 260.8M316.5 266.0L316.0 266.9L319.1 270.9L320.2 271.5L328.2 274.4L330.8 274.4L322.8 283.0L319.1 283.2L314.6 285.2L314.0 286.1L311.4 289.2L311.4 299.8L313.1 302.0M314.0 286.1L310.9 285.0L307.4 287.5L303.2 287.0L299.8 284.7L296.9 284.1L291.5 285.2L292.9 287.0L294.4 291.8L293.5 293.8L291.2 296.9L291.2 300.0L302.0 306.0L302.3 307.7L306.3 310.6M291.5 285.2L289.8 286.4L285.8 287.0L283.6 286.4L282.4 287.2L279.3 284.1L275.6 285.0L272.7 282.4M282.4 287.2L282.4 290.7L283.6 290.9L279.9 295.5L279.0 298.9L279.0 300.9L277.3 305.2L278.1 310.0M279.0 300.9L281.3 300.3L291.2 300.0M281.3 300.3L282.4 303.7L281.6 307.4L279.6 309.7L278.1 310.0M277.3 305.2L279.0 305.5L281.6 304.0M282.1 320.9L277.3 321.2L276.4 324.6L275.6 331.0L278.1 332.7L279.3 335.4L277.0 335.1L275.0 332.5L272.7 331.9L268.8 331.3L267.1 329.6L263.9 329.6L262.8 328.4M229.8 314.3L232.9 314.0L241.2 314.0L242.9 317.7L244.6 320.3L248.8 320.0L250.0 317.7L252.0 316.9L253.1 318.0L256.5 318.0L257.1 320.9L256.8 324.3L258.0 329.0L262.8 328.4L263.1 334.2L257.1 334.2L257.1 343.6L259.1 346.0L260.8 347.8M228.4 347.2L233.2 346.3L235.2 347.5L246.9 347.2L248.6 348.7L255.7 349.0L260.8 347.8L265.1 347.5L266.8 348.4M264.5 349.3L260.8 349.0L254.5 350.2L254.5 361.4L251.7 361.4L251.7 370.1L251.7 381.5L248.8 383.5L245.4 383.1L242.6 380.5L241.5 382.2M251.7 370.1L254.0 376.4L259.1 373.8L261.1 371.6L265.9 372.9L267.9 372.3L269.9 369.4L271.9 366.3L274.4 363.8L278.4 361.7L283.6 362.3M278.4 361.7L274.4 359.8L273.6 356.8L269.3 353.2L266.8 348.4L271.6 349.3L277.0 343.3L281.0 341.8L283.6 343.0L288.1 345.4L288.1 349.3L287.8 354.4L287.2 358.3L283.6 362.3L285.5 368.8L285.8 372.9L285.3 373.5L286.1 376.1L288.1 376.4M285.3 373.5L283.0 373.8L282.4 376.4L283.8 378.0L286.1 376.1M271.6 385.4L274.7 383.1L278.1 384.4L277.3 386.7L275.3 387.4L273.6 388.7L271.6 386.4L271.6 385.4M281.0 341.8L280.7 339.8L289.2 337.4L287.8 336.5L289.5 332.7L289.5 328.1L288.1 323.5L286.4 322.6L282.1 320.9M288.1 323.5L290.7 324.1L292.4 324.9L293.2 330.1L295.2 329.8L298.6 330.7L301.5 330.4L304.0 329.6L307.2 328.4L309.7 327.2M293.2 330.1L292.4 332.5L294.1 336.3L296.4 339.2L296.6 343.3L295.2 343.6L294.4 345.7L292.7 343.9L292.4 341.8L292.9 340.4L292.9 339.2L290.9 338.9L289.2 337.4M292.4 203.4L294.1 209.3L295.5 204.0L295.8 199.7L296.4 198.7L299.5 200.0L305.2 196.3L311.4 192.9L312.6 188.7L312.3 185.9L315.1 183.1M294.4 209.6L297.5 210.3L298.6 209.3L301.5 207.7L302.9 206.0L300.0 202.7L305.7 200.4L305.2 196.3M294.6 197.3L296.6 196.6L298.9 193.6L297.2 192.2M297.2 187.7L299.2 186.3L299.2 184.5L303.5 184.1L307.2 184.8L310.6 183.4L315.1 183.1L322.2 183.1M322.2 183.1L323.9 187.3L325.9 188.4L323.9 194.3L325.9 197.7L329.3 199.4L330.8 202.0L330.5 204.7L331.3 206.0L332.8 208.0M305.7 200.4L309.7 201.4L314.3 204.0L322.0 210.3L327.4 210.6L329.6 207.3L331.1 207.7M327.4 210.6L329.9 210.9L332.5 212.2M316.5 249.9L317.7 249.0L317.7 246.6L320.0 246.9L323.4 246.9L326.8 247.5L328.5 248.1L331.9 244.5L334.5 243.3L342.7 242.1L351.2 239.1L353.2 233.0L351.8 230.9L344.4 229.9L341.6 226.2M351.8 230.9L353.5 225.9L354.1 226.5L355.2 224.0M342.7 242.1L345.8 249.0M339.3 224.3L340.4 225.0M322.2 183.1L321.1 179.1L320.2 175.1L322.2 174.0L319.1 171.7L318.8 168.7L316.0 166.9L313.1 167.2M308.6 159.9L315.4 160.7L319.4 163.0L324.2 163.4L326.8 165.7L329.6 168.4L330.8 168.4L333.0 166.1M326.8 165.7L327.4 168.4L323.4 167.6L322.8 168.4L318.8 168.7M322.8 168.4L324.5 169.9L325.4 172.1L327.1 174.7L327.1 177.3M322.2 174.0L325.6 177.3L327.1 177.3L330.5 174.7L331.6 174.3L332.5 176.6L333.9 179.1M348.1 183.1L350.7 182.3L354.7 179.8L357.8 180.2L360.9 182.0L363.2 182.3L366.6 185.5L368.6 185.5L368.9 188.4M368.9 188.4L366.9 193.9L366.9 195.3L368.0 201.0L370.3 203.0L370.6 205.4L368.0 208.3L370.6 211.9L373.4 213.2L373.4 216.1L374.6 216.7L374.9 218.0L370.9 219.9L369.7 223.4M368.0 208.3L372.6 210.0L375.7 209.3L377.1 210.0L383.4 208.0L383.7 205.4L387.4 203.4L389.9 202.0L391.9 201.4L391.9 197.3L394.8 196.3L393.6 194.3L397.3 193.2L398.2 188.4L397.6 187.0L402.2 184.8L405.6 184.5L407.9 183.1M368.9 188.4L371.7 189.8L374.6 187.7L378.3 186.3L378.8 183.4L381.4 182.7L384.0 182.3L387.7 183.4L391.6 183.1L394.2 181.6L394.8 179.8L396.2 178.4L397.6 179.1L398.2 180.5L397.9 183.4L399.0 184.8L401.3 183.8L403.3 182.0L407.9 183.1M384.0 182.3L384.0 180.2L380.3 178.7L377.4 176.9L375.4 175.1L372.3 172.9L370.9 168.7L366.9 168.4L365.8 167.6L365.5 164.6L361.5 162.2L359.2 164.6L356.9 166.1L356.7 168.0L354.0 168.0L352.7 168.0L350.7 165.3L348.7 164.2L345.3 164.9L344.1 166.1M354.0 168.0L354.0 153.6L361.2 151.1L368.6 156.0L371.2 159.5L379.4 158.7L382.8 161.5L382.5 165.3L384.0 165.3L384.5 168.4L388.2 168.7L389.1 170.3L391.4 167.6L395.1 164.9L396.8 164.2M396.8 164.2L397.3 162.6L403.9 163.4L404.2 161.1L405.9 160.3L409.8 161.9L415.8 161.5L419.8 161.9L423.2 164.2M423.2 164.2L422.6 164.9L418.1 166.9L417.2 168.4L413.5 168.7L412.4 171.4L409.6 170.6L407.6 171.4L404.7 173.2L405.3 174.0L404.4 175.1L405.0 178.4L406.1 178.0L407.9 178.7L407.6 180.2L408.1 182.3L407.9 183.1M404.4 175.1L399.0 175.5L395.3 174.3L392.5 174.7L392.8 172.5L395.6 172.9L396.8 172.1L399.0 172.5L402.7 169.5L399.3 167.6L397.3 168.7L395.1 167.2L397.6 164.6L396.8 164.2M396.8 172.1L395.6 172.1L395.3 171.0L395.9 169.1L391.9 170.3L391.1 172.5L389.6 174.7L387.4 174.3L386.5 176.2L388.8 176.9L389.4 179.5L387.7 183.4M423.2 164.2L422.9 161.9L424.9 160.7L422.4 154.0L427.8 152.3L429.5 151.5L431.5 144.1L437.2 145.4L438.6 143.3L438.9 139.0L441.1 139.0L443.4 136.0M370.0 126.7L369.2 128.9L365.2 128.9L364.3 130.3L360.9 127.6L356.4 128.0L353.2 129.8L349.8 128.0L343.6 124.8L339.3 124.8L333.3 129.8L333.0 132.9L329.9 130.3L327.9 135.1L328.5 136.0L327.1 139.5L329.3 142.4L331.6 142.4L333.3 145.0L333.0 147.0L334.5 147.9M443.4 136.0L444.5 138.6L447.7 140.7L451.7 142.4L453.6 145.8L452.5 150.7L453.6 152.3L456.8 153.2L460.8 153.6L464.2 156.0L465.9 156.8L467.3 160.3L468.7 162.6L472.1 162.6L477.8 163.4L481.5 162.6L484.4 163.4L488.6 165.7L492.0 165.7L493.5 166.9L496.6 164.9L501.2 163.4L505.4 163.4L508.8 161.9L510.8 159.9L512.8 158.7L512.5 157.2L511.4 155.6L513.1 153.2L514.5 153.6L517.6 154.4L520.5 152.3L524.8 150.7L526.8 147.9L528.7 146.6L533.0 146.2L535.6 146.6L535.3 145.4L533.0 142.4L530.7 140.7L528.5 142.4L525.6 141.6L523.9 142.4L523.3 140.7L525.3 136.4L526.8 132.9M498.9 131.2L503.4 135.6L509.7 136.4L515.9 134.7L520.2 131.6L521.9 132.0L526.8 132.9L530.2 134.7L534.1 132.0L534.1 129.8L536.7 125.3L538.1 123.4L538.1 121.1L536.7 119.7L536.1 117.3L546.4 116.4L550.6 117.8L552.9 119.7L556.9 129.4L558.0 133.4L562.9 135.1L566.3 138.2L567.4 142.0L571.7 142.0L574.3 140.3L578.8 139.0L577.4 142.9L576.2 144.5L575.4 149.1L573.4 153.2L570.0 152.3L567.4 153.6L568.3 157.2L567.7 161.9L566.3 161.9L566.3 163.8M566.3 163.8L564.6 161.5L563.4 163.8L559.0 165.3L559.5 167.2L556.9 167.2L555.8 166.1L553.8 168.7L550.6 170.6L548.4 173.2M553.8 181.3L556.0 179.1L560.0 178.0M407.9 183.1L410.7 184.8L411.6 187.7L416.1 189.1L419.2 193.2L418.9 196.0L420.1 197.7L420.1 199.4L418.1 199.0L418.7 202.7L421.5 204.7L425.5 207.0M425.5 207.0L426.6 206.4L428.9 207.3L431.7 209.3L433.5 210.0L434.3 211.6L436.6 212.2L438.9 213.5L442.1 214.2L445.4 214.5M425.5 207.0L422.6 211.6L425.5 212.9L428.0 214.5L431.7 216.1L435.7 216.7L437.4 218.3L439.4 218.7L442.8 219.3L445.3 219.3L445.7 218.0L445.4 214.5L447.4 213.9L447.4 216.4M447.4 216.4L450.0 213.9L452.8 213.9L455.6 214.8L456.5 218.0L451.9 217.7L448.0 218.3L447.4 216.4M455.6 214.8L457.9 214.5L460.5 212.2L463.9 210.0L466.2 210.9L468.2 209.3L469.6 211.6L468.4 212.9L471.6 213.2M471.6 213.2L473.3 213.2L474.1 215.1L475.6 215.8L475.6 218.3L475.6 220.9L472.7 223.4L472.4 227.2L475.6 226.5L476.1 229.6L477.8 230.3L477.0 232.7L480.4 234.3L482.7 233.6L484.4 235.5L484.1 232.1L485.5 231.5L486.9 230.9L489.2 230.9L492.0 230.6L494.3 228.7L498.3 230.6L498.0 232.4L499.2 233.6L502.3 234.3M482.7 233.6L482.7 234.9L480.1 236.7L479.5 237.9M485.5 231.5L487.2 233.9L488.4 236.7L491.8 236.7L492.9 239.4L491.2 240.3L490.3 241.2L493.8 243.0L496.0 246.6L498.0 249.3L500.0 251.4L500.9 253.4L500.3 256.4L500.9 258.4L500.6 261.9L495.7 264.0L496.9 265.7L494.0 266.0L491.5 267.2M500.3 256.4L497.7 255.2L496.3 257.3L494.0 256.1L491.5 255.8L487.8 256.4L485.8 258.7L486.6 262.2L487.5 263.7M479.5 237.9L481.0 240.6L482.9 240.6L482.1 243.9L482.4 246.6L485.2 244.8L486.1 245.4L487.8 245.1L488.4 244.2L490.6 244.5L492.6 246.9L492.9 249.9L495.2 252.3L494.9 254.9L494.0 256.1M479.5 237.9L477.8 238.5L476.4 239.7L474.4 240.0L473.0 243.3L471.9 243.9L473.3 246.3L475.0 248.7L476.1 250.5L475.0 253.2L474.1 253.7L474.7 255.2L476.7 257.6L477.0 259.0L477.0 260.5L478.1 263.1L476.4 265.7L475.3 268.9M479.5 278.7L480.1 278.4L482.4 279.5L482.7 281.0L484.4 280.7L485.2 279.5M471.6 213.2L471.9 214.5L471.0 217.1L469.0 216.4L465.3 218.7L465.6 220.6L463.9 223.1L463.9 224.7L462.5 227.2L460.2 226.5L460.2 229.9L459.6 230.9L459.9 232.1L458.5 233.0L458.5 235.2L457.6 237.0M458.5 233.0L456.8 228.1L456.2 228.1L455.1 230.6L454.2 228.4L455.6 226.5L457.6 223.7L450.5 222.8L450.2 220.6L446.8 219.3L445.7 221.2L447.7 223.1L446.0 224.0L445.4 225.3L447.1 226.2L446.5 228.1L447.7 230.3L448.0 232.7L448.0 233.9M416.1 189.1L413.5 191.8L410.4 192.5L405.9 191.8L404.4 193.2L405.6 196.3L406.7 198.3L409.0 200.0L406.4 202.0L406.4 204.4L403.9 207.7L401.9 210.9L399.0 214.5L395.6 214.2L392.5 217.7L394.5 219.0L394.8 221.5L396.2 223.1L396.8 225.6L390.5 225.6L388.8 227.8M506.6 291.5L507.1 293.5L509.1 294.9L511.1 294.4L512.8 294.6L514.5 293.2L518.5 293.8L520.8 293.2L522.2 289.2L523.3 288.1L524.5 285.0L527.6 285.0L530.2 285.5M547.5 323.8L550.4 322.9L550.6 324.1M169.5 165.7L172.0 166.1L175.7 165.7L176.6 167.6L175.2 168.7L174.9 172.1L173.5 174.3L174.6 176.6L173.8 178.7L174.9 179.8L174.3 180.9L173.5 182.3L173.5 183.4M189.4 159.9L190.8 161.5L194.8 162.6L196.8 162.2L199.9 164.2L203.3 163.4M216.1 158.7L215.9 156.8L213.9 153.6L215.0 152.3L214.1 150.7L214.1 149.5L215.6 150.3L218.4 148.7L219.0 149.5L221.0 147.9L223.0 148.3L224.4 147.4L224.4 145.8L226.1 146.2L229.5 145.0L230.1 146.2L234.1 147.4L233.8 149.5L234.3 151.1M214.1 149.5L211.9 148.3L211.9 146.6L214.1 144.1L215.3 143.7L216.1 142.9L219.0 142.0L222.1 143.3L221.8 145.0L224.4 145.8M216.1 142.9L216.4 139.9L217.8 136.9L213.9 136.0L212.4 134.7L211.6 135.1L211.0 134.7L208.5 132.5L207.0 132.9L205.0 130.7L203.6 128.9L202.5 128.9L201.9 127.6M204.2 126.7L206.2 126.7L209.0 125.7L210.7 128.0L212.4 128.9L211.9 123.9L213.6 123.9L214.1 122.5L214.4 116.9M212.4 128.9L211.9 132.0L212.4 132.9L212.4 134.7M219.0 109.3L223.0 109.3M234.9 115.0L235.8 117.8L234.9 118.8L236.6 123.0L236.3 124.8L237.5 127.6L236.3 128.0L235.5 127.6L234.9 128.5L232.6 129.4L231.8 130.3L229.5 131.2L230.1 132.5L230.4 134.7L231.8 135.6L233.5 137.3L232.4 139.5L231.5 139.9L231.8 142.9L230.6 142.4L229.2 142.4L227.2 143.3L224.7 142.9L224.4 144.1L223.0 142.9L222.1 143.3M232.4 139.5L235.5 138.6L237.2 136.9L238.3 136.9L240.3 138.2L241.7 137.7L243.2 138.6L242.9 139.0L243.2 140.7L242.9 142.4L241.2 142.4L241.7 143.3L240.9 145.8L237.8 146.6L236.3 147.9L234.1 147.4M237.5 127.6L240.9 129.4L240.9 130.7L242.3 131.6L242.9 130.3L244.9 130.7L244.9 132.5L247.1 132.5L248.6 134.7L247.7 134.7L246.6 135.6L245.7 137.3L244.6 137.7L243.2 138.6M248.6 134.7L249.7 134.2L251.1 136.0L252.8 135.1L254.3 135.6L256.2 134.7L259.1 136.4L257.7 139.5L257.1 139.9L253.1 138.6L252.3 139.9L250.8 140.3L248.3 140.7L248.0 141.6L245.7 142.0L243.2 140.7M259.1 136.4L258.8 134.7L261.4 131.2L262.8 130.7L263.1 129.4L261.6 125.3L261.6 123.4L260.8 121.1L262.5 120.2L262.5 118.3L261.6 116.4L261.6 114.5L260.8 113.0L259.4 112.5L250.8 112.0M259.4 112.5L259.7 109.6L258.2 109.1L255.4 108.1M261.6 114.5L264.5 114.5L267.3 112.5L268.2 110.1L270.5 108.1L270.2 106.1L271.9 105.1L275.0 103.0L274.2 97.9L272.5 96.3L273.6 94.7L272.7 89.8L274.7 86.5L274.4 85.4M254.8 104.1L258.0 102.5L262.8 102.5L265.6 102.0L267.3 103.6L270.2 106.1M263.9 94.7L266.5 93.6L267.6 94.7L270.2 96.3L272.5 96.3M275.0 103.0L277.9 104.6L278.4 105.6L279.9 105.1L282.7 106.1L283.0 108.6L282.4 110.1L284.1 113.0L285.3 114.0L285.0 115.0L287.0 115.9L287.8 116.9L286.7 118.3L284.4 117.8L283.8 118.3L284.4 120.2L285.3 123.0M261.6 125.3L263.1 125.3L264.8 123.9L266.8 123.9L269.6 124.4L273.0 125.3L275.0 125.3L276.2 126.2L277.3 125.3L278.1 126.2L280.7 126.2L281.8 124.4L282.7 123.4L285.3 123.0L286.4 123.0L287.0 122.1L290.9 122.1L292.7 124.4L291.8 125.3L292.1 126.7L294.4 127.1L295.5 128.9L295.5 129.8L298.9 131.6L301.2 130.7L302.9 132.9L304.6 132.9L308.8 134.2L308.8 135.6L307.7 137.7L308.3 140.3L307.7 141.6L305.2 142.0L303.7 143.3L303.5 145.0M257.7 139.5L259.4 141.6L260.5 140.7L265.6 142.4L266.5 141.6L270.5 140.3L271.3 139.5L273.0 139.0L276.4 140.7L277.6 142.0L279.0 145.8L279.9 146.6L279.6 148.3L277.0 148.3L277.0 149.5L275.9 151.1L275.0 151.5M270.5 140.3L272.2 142.0L274.7 146.2L275.0 151.5L276.4 152.8L279.0 152.3M259.4 141.6L257.7 142.4L256.2 145.4L254.5 148.3L252.3 149.1L254.0 150.7L256.0 152.8L256.2 154.4L257.7 155.6L258.8 156.0L259.4 155.2L259.4 156.8L259.9 158.3L261.1 157.9L263.4 158.7L267.6 158.7L269.0 157.5L272.2 156.8L274.4 158.3L276.2 158.7M252.3 149.1L250.6 148.7L248.3 149.9L247.4 150.3L244.9 149.7L242.9 147.9L242.0 147.4L240.9 145.8M242.0 147.4L239.7 148.7L239.5 150.3L238.3 150.7L238.3 151.5L237.2 151.5L236.3 151.1L235.8 151.5L233.8 151.5M248.3 149.9L249.1 151.5L248.8 154.0L247.7 153.2L245.7 153.2L243.2 152.8L241.7 152.8L241.2 153.6L240.2 152.8L239.6 154.4L240.9 156.0L241.7 157.5L242.9 158.7L244.0 159.9L245.2 161.5L247.7 162.6L247.4 163.4M248.8 154.0L250.0 154.0L249.1 156.0L250.3 157.5L249.4 159.5L248.0 160.7L247.4 163.4M249.4 159.5L252.5 161.9L252.0 163.0L251.1 163.4L250.0 165.7M252.0 163.0L253.1 164.6L253.4 165.7L253.1 167.2L253.4 168.7L254.5 169.9L253.7 171.4L253.4 172.5L252.3 174.3M254.5 169.9L256.5 169.5L259.1 168.7L259.9 168.0L262.2 168.0L264.5 166.9L266.5 168.4L269.0 168.0L269.0 166.1L270.5 166.9L269.6 169.5L268.8 169.9M270.5 166.9L271.9 164.9L274.4 165.3M259.4 156.8L258.5 158.3L260.2 160.7L259.1 161.9L258.5 164.2L259.9 165.3L259.9 168.0M258.5 164.2L256.2 164.6L253.4 165.7M252.5 161.9L254.0 160.3L256.2 162.6L256.2 164.6M226.1 88.7L227.5 86.0L229.8 82.0L230.6 75.0L228.9 72.0L228.7 64.0L230.6 57.6L233.5 53.0L235.5 48.3L236.9 44.1L237.8 43.4L240.6 35.5L242.6 30.3L245.2 30.3L246.0 25.6L251.4 27.2L251.7 21.7L253.4 21.7M253.4 21.7L257.4 25.6L261.6 23.3L265.1 25.6L267.9 21.7L269.3 16.0L273.6 12.7L277.3 16.0L276.2 21.7L282.7 17.7M253.4 21.7L256.2 21.7L261.6 31.0L261.9 42.0L262.8 44.8L263.6 46.2M276.2 21.7L275.6 27.2L280.1 32.5L277.6 38.4L280.7 46.2L278.7 52.4L281.3 57.0L280.1 60.9L284.4 65.3L283.3 68.4L274.7 79.7L273.9 79.7M176.9 113.5L174.0 113.5L171.8 111.6L173.8 109.1M4.2 154.0L2.0 150.7L2.0 145.0L-2.0 143.3M24.1 272.9L24.7 273.5L22.1 276.1L23.3 277.2L20.7 278.1L20.2 280.2L22.1 282.4M22.1 282.4L21.6 283.8L18.2 285.2L16.2 285.8L13.0 285.8L11.1 285.5L12.2 290.1L14.5 290.4L12.2 292.9L8.8 294.1L6.2 295.2L4.5 293.6L3.4 292.4L2.0 289.2L3.4 287.2L2.0 284.4L2.2 282.4L3.4 279.8L-1.5 279.5M22.1 282.4L24.1 283.0L24.7 284.7L25.6 285.8L24.7 287.0L24.1 289.2L25.0 292.1L27.0 293.5L28.4 293.5L29.5 292.9L31.8 291.8L34.1 291.8L35.5 292.1L35.2 290.9L36.7 290.4L38.1 290.1L39.8 290.7L40.9 291.2L41.8 290.4L44.3 291.2L45.2 290.1L46.9 288.1L47.7 285.2M32.4 280.1L31.8 282.7L30.1 283.5L29.8 285.5L31.0 287.8L32.1 289.2L34.1 291.8M41.2 280.7L40.1 283.0L41.2 287.0L39.8 290.7M-2.9 328.7L0.5 328.7L5.4 325.5L8.8 325.2L9.1 330.1L11.9 333.0L15.0 333.3L16.2 334.5L18.2 335.1L19.3 336.0L21.0 336.0L22.7 336.8L23.3 340.7L23.6 344.2L29.3 344.2L28.7 346.0L29.0 347.2L30.7 348.1L31.2 349.9L30.7 352.3L30.1 355.3L29.3 355.9M29.3 355.9L26.7 353.5L24.1 353.2L19.0 354.1L17.6 356.8L16.5 362.0M29.3 355.9L30.1 357.4L30.1 361.7L34.1 361.7L36.1 362.6L36.7 363.5L36.9 366.3L37.2 367.6L39.2 366.9L40.4 367.6L40.4 369.4L40.1 371.3L39.5 372.6M39.5 372.6L38.9 375.7L36.4 378.3L34.1 378.6L31.0 378.3L28.1 377.3L31.0 372.6L30.4 371.3L27.6 370.1L24.1 367.6L21.9 367.2L16.5 362.0L16.2 361.4L12.8 361.4L11.6 363.8L9.9 361.7L6.2 360.8L3.9 363.5L-0.0 364.5M39.5 372.6L42.3 374.1L42.3 376.7L39.8 378.6L37.8 379.9L34.7 383.1L31.0 387.4L30.1 390.0L29.5 393.4L29.3 396.7L28.7 399.8M31.0 387.4L32.7 387.1L35.5 389.7L36.7 389.7L39.5 391.7L41.8 393.4L43.5 395.7L42.2 397.4L42.9 399.5M-9.1 240.0L-9.1 244.2" fill="none" stroke="#c9a6c8" stroke-width="0.8" stroke-linejoin="round" opacity="0.85"/>
</svg>
<svg class="abs" style="left:0;top:0" width="585" height="400" viewBox="0 0 585 400">
<circle cx="0" cy="263" r="14" fill="#00e400" fill-opacity=".8" stroke="#00e400" stroke-opacity=".5" stroke-width="2.5"/>
<circle cx="30" cy="402" r="14" fill="#989890" fill-opacity=".8" stroke="#989890" stroke-opacity=".5" stroke-width="2.5"/>
<circle cx="204" cy="185" r="14" fill="#ffff00" fill-opacity=".8" stroke="#ffff00" stroke-opacity=".5" stroke-width="2.5"/>
<circle cx="173" cy="261" r="14" fill="#ff0000" fill-opacity=".8" stroke="#ff0000" stroke-opacity=".5" stroke-width="2.5"/>
<circle cx="288" cy="297" r="14" fill="#ff0000" fill-opacity=".8" stroke="#ff0000" stroke-opacity=".5" stroke-width="2.5"/>
<circle cx="305" cy="272" r="14" fill="#8e8b5a" fill-opacity=".8" stroke="#8e8b5a" stroke-opacity=".5" stroke-width="2.5"/>
<circle cx="256" cy="164" r="14" fill="#ff0000" fill-opacity=".8" stroke="#ff0000" stroke-opacity=".5" stroke-width="2.5"/>
<circle cx="248" cy="159" r="14" fill="#ff0000" fill-opacity=".8" stroke="#ff0000" stroke-opacity=".5" stroke-width="2.5"/>
<circle cx="323" cy="197" r="14" fill="#989890" fill-opacity=".8" stroke="#989890" stroke-opacity=".5" stroke-width="2.5"/>
<circle cx="298" cy="202" r="14" fill="#00e400" fill-opacity=".8" stroke="#00e400" stroke-opacity=".5" stroke-width="2.5"/>
<circle cx="331" cy="210" r="14" fill="#ff0000" fill-opacity=".8" stroke="#ff0000" stroke-opacity=".5" stroke-width="2.5"/>
<circle cx="349" cy="227" r="14" fill="#ffff00" fill-opacity=".8" stroke="#ffff00" stroke-opacity=".5" stroke-width="2.5"/>
<circle cx="354" cy="224" r="14" fill="#00e400" fill-opacity=".8" stroke="#00e400" stroke-opacity=".5" stroke-width="2.5"/>
<circle cx="339" cy="220" r="14" fill="#ff0000" fill-opacity=".8" stroke="#ff0000" stroke-opacity=".5" stroke-width="2.5"/>
<circle cx="362" cy="181" r="14" fill="#00e400" fill-opacity=".8" stroke="#00e400" stroke-opacity=".5" stroke-width="2.5"/>
<circle cx="386" cy="225" r="14" fill="#99004c" fill-opacity=".8" stroke="#99004c" stroke-opacity=".5" stroke-width="2.5"/>
<circle cx="499" cy="142" r="14" fill="#99004c" fill-opacity=".8" stroke="#99004c" stroke-opacity=".5" stroke-width="2.5"/>
<circle cx="546" cy="167" r="14" fill="#99004c" fill-opacity=".8" stroke="#99004c" stroke-opacity=".5" stroke-width="2.5"/>
<circle cx="526" cy="174" r="14" fill="#ff0000" fill-opacity=".8" stroke="#ff0000" stroke-opacity=".5" stroke-width="2.5"/>
<circle cx="541" cy="204" r="14" fill="#ff0000" fill-opacity=".8" stroke="#ff0000" stroke-opacity=".5" stroke-width="2.5"/>
<circle cx="491" cy="206" r="14" fill="#ff7e00" fill-opacity=".8" stroke="#ff7e00" stroke-opacity=".5" stroke-width="2.5"/>
<circle cx="392" cy="168" r="14" fill="#ffff00" fill-opacity=".8" stroke="#ffff00" stroke-opacity=".5" stroke-width="2.5"/>
<circle cx="391" cy="180" r="14" fill="#ffff00" fill-opacity=".8" stroke="#ffff00" stroke-opacity=".5" stroke-width="2.5"/>
<circle cx="408" cy="163" r="14" fill="#00e400" fill-opacity=".8" stroke="#00e400" stroke-opacity=".5" stroke-width="2.5"/>
<circle cx="393" cy="193" r="14" fill="#ff0000" fill-opacity=".8" stroke="#ff0000" stroke-opacity=".5" stroke-width="2.5"/>
<circle cx="402" cy="195" r="14" fill="#ff0000" fill-opacity=".8" stroke="#ff0000" stroke-opacity=".5" stroke-width="2.5"/>
<circle cx="414" cy="213" r="14" fill="#7e0023" fill-opacity=".8" stroke="#7e0023" stroke-opacity=".5" stroke-width="2.5"/>
<circle cx="406" cy="204" r="14" fill="#00e400" fill-opacity=".8" stroke="#00e400" stroke-opacity=".5" stroke-width="2.5"/>
<circle cx="438" cy="216" r="14" fill="#ff0000" fill-opacity=".8" stroke="#ff0000" stroke-opacity=".5" stroke-width="2.5"/>
<circle cx="456" cy="227" r="14" fill="#ff0000" fill-opacity=".8" stroke="#ff0000" stroke-opacity=".5" stroke-width="2.5"/>
<circle cx="446" cy="232" r="14" fill="#ff0000" fill-opacity=".8" stroke="#ff0000" stroke-opacity=".5" stroke-width="2.5"/>
<circle cx="402" cy="242" r="14" fill="#ff0000" fill-opacity=".8" stroke="#ff0000" stroke-opacity=".5" stroke-width="2.5"/>
<circle cx="418" cy="247" r="14" fill="#ffff00" fill-opacity=".8" stroke="#ffff00" stroke-opacity=".5" stroke-width="2.5"/>
<circle cx="423" cy="260" r="14" fill="#ffff00" fill-opacity=".8" stroke="#ffff00" stroke-opacity=".5" stroke-width="2.5"/>
<circle cx="422" cy="278" r="14" fill="#ffff00" fill-opacity=".8" stroke="#ffff00" stroke-opacity=".5" stroke-width="2.5"/>
<circle cx="518" cy="230" r="14" fill="#ffff00" fill-opacity=".8" stroke="#ffff00" stroke-opacity=".5" stroke-width="2.5"/>
<circle cx="496" cy="237" r="14" fill="#ffff00" fill-opacity=".8" stroke="#ffff00" stroke-opacity=".5" stroke-width="2.5"/>
<circle cx="468" cy="249" r="14" fill="#ff0000" fill-opacity=".8" stroke="#ff0000" stroke-opacity=".5" stroke-width="2.5"/>
<circle cx="488" cy="246" r="14" fill="#ff7e00" fill-opacity=".8" stroke="#ff7e00" stroke-opacity=".5" stroke-width="2.5"/>
<circle cx="499" cy="267" r="14" fill="#ff7e00" fill-opacity=".8" stroke="#ff7e00" stroke-opacity=".5" stroke-width="2.5"/>
<circle cx="499" cy="315" r="14" fill="#ffff00" fill-opacity=".8" stroke="#ffff00" stroke-opacity=".5" stroke-width="2.5"/>
</svg>
<div class="mk" style="left:-17px;top:254px">8</div>
<div class="mk" style="left:10px;top:393px">N/A</div>
<div class="mk" style="left:184px;top:176px">99</div>
<div class="mk" style="left:153px;top:252px">190</div>
<div class="mk" style="left:268px;top:288px">182</div>
<div class="mk" style="left:285px;top:263px">N/A</div>
<div class="mk" style="left:236px;top:155px">158</div>
<div class="mk" style="left:228px;top:150px">169</div>
<div class="mk" style="left:303px;top:188px">N/A</div>
<div class="mk" style="left:278px;top:193px">43</div>
<div class="mk" style="left:311px;top:201px">161</div>
<div class="mk" style="left:329px;top:218px">62</div>
<div class="mk" style="left:334px;top:215px">35</div>
<div class="mk" style="left:319px;top:211px">160</div>
<div class="mk" style="left:342px;top:172px">24</div>
<div class="mk" style="left:366px;top:216px">219</div>
<div class="mk" style="left:479px;top:133px">262</div>
<div class="mk" style="left:526px;top:158px">296</div>
<div class="mk" style="left:506px;top:165px">171</div>
<div class="mk" style="left:521px;top:195px">152</div>
<div class="mk" style="left:471px;top:197px">106</div>
<div class="mk" style="left:372px;top:159px">75</div>
<div class="mk" style="left:371px;top:171px">62</div>
<div class="mk" style="left:388px;top:154px">44</div>
<div class="mk" style="left:373px;top:184px">115</div>
<div class="mk" style="left:382px;top:186px">157</div>
<div class="mk" style="left:394px;top:204px">304</div>
<div class="mk" style="left:386px;top:195px">55</div>
<div class="mk" style="left:418px;top:207px">194</div>
<div class="mk" style="left:436px;top:218px">186</div>
<div class="mk" style="left:426px;top:223px">199</div>
<div class="mk" style="left:382px;top:233px">161</div>
<div class="mk" style="left:398px;top:238px">88</div>
<div class="mk" style="left:403px;top:251px">84</div>
<div class="mk" style="left:402px;top:269px">81</div>
<div class="mk" style="left:498px;top:221px">52</div>
<div class="mk" style="left:476px;top:228px">91</div>
<div class="mk" style="left:448px;top:240px">156</div>
<div class="mk" style="left:468px;top:237px">108</div>
<div class="mk" style="left:479px;top:258px">103</div>
<div class="mk" style="left:479px;top:306px">77</div>
<div class="pop"><div class="pt">Bishkek<br>2020-02-10 8:00<br>AM (LT)</div>
<table cellspacing="0"><tr><th style="width:73px">Pollutant</th><th>AQI</th></tr><tr><td>PM2.5</td><td style="background:#00e400;color:#000">44</td></tr></table></div>
<div class="tip"></div>
</div>

<div class="abs bar" style="top:5px">Select a City</div>
<div class="abs sel" style="top:42px">Bishkek<span class="x">×</span><span class="c"></span></div>
<div class="abs bar" style="top:95px">Select a Parameter</div>
<div class="abs sel" style="top:132px">PM2.5<span class="x">×</span><span class="c"></span></div>

<div id="info" class="abs"><b>Bishkek</b>The Bishkek air quality monitor is currently undergoing routine annual maintenance. Data flow will resume when maintenance has been completed.
<svg class="abs" style="left:231px;top:93px" width="35" height="35" viewBox="0 0 35 35"><rect width="35" height="35" fill="#f0b341"/><circle cx="8.5" cy="26.5" r="3.6" fill="#fff"/><path d="M5 15.5 a14.5 14.5 0 0 1 14.5 14.5" fill="none" stroke="#fff" stroke-width="4.6"/><path d="M5 6.5 a23.5 23.5 0 0 1 23.5 23.5" fill="none" stroke="#fff" stroke-width="4.6"/></svg>
</div>
<div id="note" class="abs">Note: Values above 500 are considered Beyond the AQI.<br>Follow recommendations for the Hazardous category.<br>Additional information on reducing exposure to extremely<br>high levels of particle pollution is available <a>here</a>.</div>

<div id="t1" class="abs tab">AQI</div>
<div id="t2" class="abs tab">Concentration</div>
<div id="t3" class="abs tab">Historical</div>
<div id="tabline" class="abs"></div>
<div id="learn" class="abs">Learn more about how the Air Quality Index [AQI] is calculated from the EPA <a>here</a>.</div>

<div id="chart" class="abs">
<svg width="680" height="289" viewBox="0 0 680 289" style="position:absolute;left:0;top:0;font-family:'DejaVu Sans',Verdana,sans-serif">
<text x="334" y="24" text-anchor="middle" font-size="18" fill="#333">Bishkek - PM2.5</text>
<text x="59" y="249.5" text-anchor="end" font-size="11" fill="#333">0</text>
<path d="M74 210.5H660" stroke="#d8d8d8" stroke-width="1" fill="none"/>
<text x="59" y="212.5" text-anchor="end" font-size="11" fill="#333">100</text>
<path d="M74 173.5H660" stroke="#d8d8d8" stroke-width="1" fill="none"/>
<text x="59" y="175.5" text-anchor="end" font-size="11" fill="#333">200</text>
<path d="M74 136.5H660" stroke="#d8d8d8" stroke-width="1" fill="none"/>
<text x="59" y="138.5" text-anchor="end" font-size="11" fill="#333">300</text>
<path d="M74 99.5H660" stroke="#d8d8d8" stroke-width="1" fill="none"/>
<text x="59" y="101.5" text-anchor="end" font-size="11" fill="#333">400</text>
<path d="M74 62.5H660" stroke="#d8d8d8" stroke-width="1" fill="none"/>
<text x="59" y="64.5" text-anchor="end" font-size="11" fill="#333">500</text>
<text transform="translate(28 150) rotate(-90)" text-anchor="middle" font-size="12" fill="#333">AQI</text>
<path d="M74.5 247v10M98.5 247v10M123.5 247v10M147.5 247v10M172.5 247v10M196.5 247v10M220.5 247v10M245.5 247v10M269.5 247v10M294.5 247v10M318.5 247v10M343.5 247v10M367.5 247v10M391.5 247v10M416.5 247v10M440.5 247v10M465.5 247v10M489.5 247v10M514.5 247v10M538.5 247v10M562.5 247v10M587.5 247v10M611.5 247v10M636.5 247v10M660.5 247v10" stroke="#c0d0e0" stroke-width="1" fill="none"/>
<path d="M74 247.5H660" stroke="#c0d0e0" stroke-width="1" fill="none"/>
<path d="M79.5 247V234.5h12V247" fill="#00e400" stroke="#000" stroke-width="1"/>
<text transform="translate(89.2 263) rotate(-45)" text-anchor="end" font-size="11" fill="#666">9 AM</text>
<path d="M104.5 247V234.5h12V247" fill="#00e400" stroke="#000" stroke-width="1"/>
<text transform="translate(113.6 263) rotate(-45)" text-anchor="end" font-size="11" fill="#666">10 AM</text>
<path d="M128.5 247V235.5h12V247" fill="#00e400" stroke="#000" stroke-width="1"/>
<text transform="translate(138.0 263) rotate(-45)" text-anchor="end" font-size="11" fill="#666">11 AM</text>
<path d="M152.5 247V233.5h12V247" fill="#00e400" stroke="#000" stroke-width="1"/>
<text transform="translate(162.5 263) rotate(-45)" text-anchor="end" font-size="11" fill="#666">12 PM</text>
<path d="M177.5 247V234.5h12V247" fill="#00e400" stroke="#000" stroke-width="1"/>
<text transform="translate(186.9 263) rotate(-45)" text-anchor="end" font-size="11" fill="#666">1 PM</text>
<path d="M201.5 247V231.5h12V247" fill="#00e400" stroke="#000" stroke-width="1"/>
<text transform="translate(211.3 263) rotate(-45)" text-anchor="end" font-size="11" fill="#666">2 PM</text>
<path d="M226.5 247V231.5h12V247" fill="#00e400" stroke="#000" stroke-width="1"/>
<text transform="translate(235.7 263) rotate(-45)" text-anchor="end" font-size="11" fill="#666">3 PM</text>
<path d="M250.5 247V233.5h12V247" fill="#00e400" stroke="#000" stroke-width="1"/>
<text transform="translate(260.1 263) rotate(-45)" text-anchor="end" font-size="11" fill="#666">4 PM</text>
<path d="M275.5 247V237.5h12V247" fill="#00e400" stroke="#000" stroke-width="1"/>
<text transform="translate(284.5 263) rotate(-45)" text-anchor="end" font-size="11" fill="#666">5 PM</text>
<path d="M299.5 247V235.5h12V247" fill="#00e400" stroke="#000" stroke-width="1"/>
<text transform="translate(309.0 263) rotate(-45)" text-anchor="end" font-size="11" fill="#666">6 PM</text>
<path d="M323.5 247V233.5h12V247" fill="#00e400" stroke="#000" stroke-width="1"/>
<text transform="translate(333.4 263) rotate(-45)" text-anchor="end" font-size="11" fill="#666">7 PM</text>
<path d="M348.5 247V231.5h12V247" fill="#00e400" stroke="#000" stroke-width="1"/>
<text transform="translate(357.8 263) rotate(-45)" text-anchor="end" font-size="11" fill="#666">8 PM</text>
<path d="M372.5 247V228.5h12V247" fill="#ffff00" stroke="#000" stroke-width="1"/>
<text transform="translate(382.2 263) rotate(-45)" text-anchor="end" font-size="11" fill="#666">9 PM</text>
<path d="M397.5 247V229.5h12V247" fill="#00e400" stroke="#000" stroke-width="1"/>
<text transform="translate(406.6 263) rotate(-45)" text-anchor="end" font-size="11" fill="#666">10 PM</text>
<path d="M421.5 247V227.5h12V247" fill="#ffff00" stroke="#000" stroke-width="1"/>
<text transform="translate(431.0 263) rotate(-45)" text-anchor="end" font-size="11" fill="#666">11 PM</text>
<path d="M445.5 247V228.5h12V247" fill="#ffff00" stroke="#000" stroke-width="1"/>
<text transform="translate(455.5 263) rotate(-45)" text-anchor="end" font-size="11" fill="#666">Feb 10 12 AM</text>
<path d="M470.5 247V231.5h12V247" fill="#00e400" stroke="#000" stroke-width="1"/>
<text transform="translate(479.9 263) rotate(-45)" text-anchor="end" font-size="11" fill="#666">1 AM</text>
<path d="M494.5 247V234.5h12V247" fill="#00e400" stroke="#000" stroke-width="1"/>
<text transform="translate(504.3 263) rotate(-45)" text-anchor="end" font-size="11" fill="#666">2 AM</text>
<path d="M519.5 247V235.5h12V247" fill="#00e400" stroke="#000" stroke-width="1"/>
<text transform="translate(528.7 263) rotate(-45)" text-anchor="end" font-size="11" fill="#666">3 AM</text>
<path d="M543.5 247V234.5h12V247" fill="#00e400" stroke="#000" stroke-width="1"/>
<text transform="translate(553.1 263) rotate(-45)" text-anchor="end" font-size="11" fill="#666">4 AM</text>
<path d="M568.5 247V234.5h12V247" fill="#00e400" stroke="#000" stroke-width="1"/>
<text transform="translate(577.5 263) rotate(-45)" text-anchor="end" font-size="11" fill="#666">5 AM</text>
<path d="M592.5 247V229.5h12V247" fill="#00e400" stroke="#000" stroke-width="1"/>
<text transform="translate(602.0 263) rotate(-45)" text-anchor="end" font-size="11" fill="#666">6 AM</text>
<path d="M616.5 247V228.5h12V247" fill="#ffff00" stroke="#000" stroke-width="1"/>
<text transform="translate(626.4 263) rotate(-45)" text-anchor="end" font-size="11" fill="#666">7 AM</text>
<path d="M641.5 247V231.5h12V247" fill="#00e400" stroke="#000" stroke-width="1"/>
<text transform="translate(650.8 263) rotate(-45)" text-anchor="end" font-size="11" fill="#666">8 AM</text>
</svg>
</div>

<div id="cc" class="abs">
<div class="h"><div style="font-size:15px">Current Conditions</div><div style="font-size:12px;line-height:17px">observed at</div><div style="font-size:15px;line-height:22px">Feb 10, 2020 8:00 AM (LT)</div></div>
<div class="g">44 AQI<br>Good<br>PM2.5</div>
<div class="m"><b>Health Message</b>The AQI value for your community is between 0 and 50. Air quality is satisfactory and poses little or no health risk.</div>
</div>
</body>
</html>
